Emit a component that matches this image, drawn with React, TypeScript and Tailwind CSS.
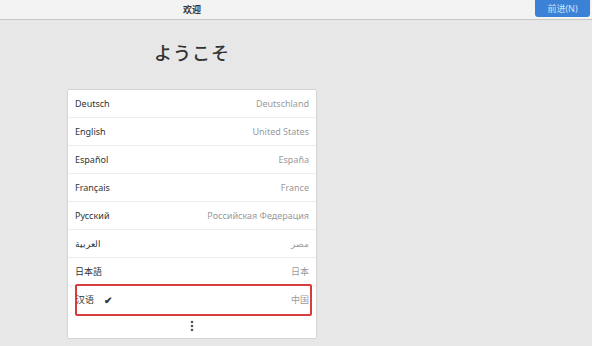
import React from 'react';

const languages = [
  { name: 'Deutsch', region: 'Deutschland' },
  { name: 'English', region: 'United States' },
  { name: 'Español', region: 'España' },
  { name: 'Français', region: 'France' },
  { name: 'Русский', region: 'Российская Федерация' },
  { name: 'العربية', region: 'مصر' },
  { name: '日本語', region: '日本' },
];

const App = () => {
  return (
    <div className="w-[592px] h-[346px] overflow-hidden bg-[#e8e7e7] font-['Noto_Sans','Noto_Sans_CJK_SC',sans-serif] text-[#2e3436]">
      <header className="relative h-[20px] bg-[#f4f3f3] border-b border-[#c8c6c5] flex items-center">
        <div className="w-[384px] text-center text-[9px] font-bold text-[#333]">欢迎</div>
        <button className="absolute right-[2px] top-0 w-[55px] h-[17px] rounded-b-[3px] bg-[#3b82d6] text-[#cfe0f5] text-[9px] leading-[17px]">
          前进(N)
        </button>
      </header>

      <div className="w-[384px] flex flex-col items-center">
        <h1 className="mt-[21px] text-center text-[18px] leading-[24px] font-medium text-[#333] tracking-[1px]">
          ようこそ
        </h1>

        <div className="mt-[24px] w-[250px] bg-white border border-[#d6d5d4] rounded-[2px] text-[9px]">
          {languages.map((l) => (
            <div key={l.name} className="h-[28px] px-[7px] flex items-center justify-between border-b border-[#efeeed]">
              <span className="text-[#2e3436]">{l.name}</span>
              <span className="text-[#9a9a9a]">{l.region}</span>
            </div>
          ))}
          <div className="h-[28px] pl-[7px] pr-[4px] flex items-center">
            <div className="w-full h-[32px] border-2 border-[#d83b3b] rounded-[2px] flex items-center justify-between pr-[1px]">
              <span className="flex items-center gap-[10px] -ml-[1px]">
                <span>汉语</span>
                <span className="text-[10px] font-bold">✔</span>
              </span>
              <span className="text-[#9a9a9a]">中国</span>
            </div>
          </div>
          <div className="h-[24px] flex items-center justify-center">
            <svg width="4" height="12" viewBox="0 0 4 12">
              <circle cx="2" cy="2" r="1.3" fill="#555" />
              <circle cx="2" cy="6" r="1.3" fill="#555" />
              <circle cx="2" cy="10" r="1.3" fill="#555" />
            </svg>
          </div>
        </div>
      </div>
    </div>
  );
};

export default App;
